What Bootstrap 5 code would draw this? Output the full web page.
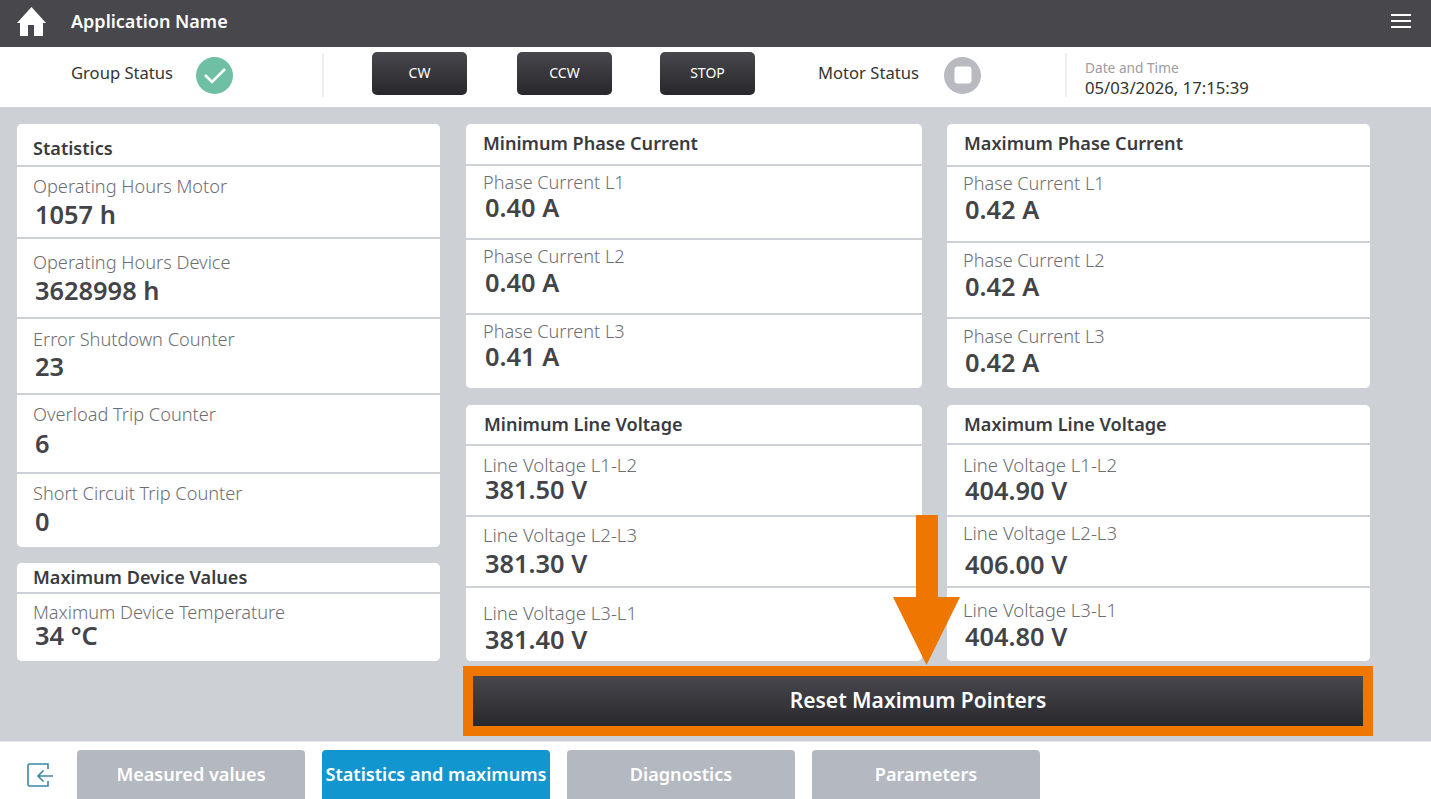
<!DOCTYPE html>
<html lang="en">
<head>
<meta charset="utf-8">
<title>Application Name</title>
<link href="https://cdn.jsdelivr.net/npm/bootstrap@5.3.2/dist/css/bootstrap.min.css" rel="stylesheet">
<style>
html, body { height: 799px; overflow: hidden; }
body { font-family: "Noto Sans", "Open Sans", sans-serif; background: #cdd1d6; color: #3f4045; }

/* top bars */
.app-bar { height: 47px; background: #47474c; padding: 0 20px 5px 17px; }
.app-bar .navbar-brand { font-size: 18px; font-weight: 600; color: #fff; margin: 0 0 0 25px; padding: 0; }
.menu-btn { background: none; border: 0; padding: 0; line-height: 0; }
.status-bar { height: 60px; background: #fff; padding-bottom: 4px; }
.status-label { font-size: 16.6px; color: #333; width: 125px; margin-left: 71px; margin-top: -3px; }
.status-label.motor { margin-left: 63px; width: 126px; }
.status-dot { width: 37px; height: 37px; border-radius: 50%; flex: none; }
.dot-ok { background: #6fbfa5; }
.dot-off { background: #b8bac0; }
.v-sep { width: 2px; height: 44px; background: #eceef0; flex: none; }
.sep-one { margin-left: 89px; margin-right: 48px; }
.sep-two { margin-left: 84px; margin-right: 18px; }
.cmd-btn { width: 95px; height: 43px; margin-top: -3px; padding: 0 0 3px; font-size: 14px; color: #fff; border: 0; border-radius: 5px; background: linear-gradient(#47474d, #27272c); }
.cmd-btn:hover { color: #fff; background: linear-gradient(#47474d, #27272c); }
.cmd-btn + .cmd-btn { margin-left: 50px; }
.cmd-btn.stop { margin-left: 48px; }
.dt-block { padding-top: 8px; }
.dt-label { font-size: 13.7px; line-height: 18px; color: #9a9ca0; }
.dt-value { font-size: 16.7px; line-height: 22px; color: #333; }

/* content */
.content { height: 634px; position: relative; padding: 17px 0 0 17px; gap: 26px; }
.col-left { width: 423px; gap: 16px; }
.col-right { width: 904px; }
.col-mid { width: 456px; gap: 17px; }
.col-end { width: 423px; gap: 17px; }
.cols { gap: 25px; }
.card { border: 0; border-radius: 5px; }
.card-header { background: #fff; border: 0; padding: 0 0 0 16px; font-size: 18.1px; font-weight: 600; color: #3a3b40; display: flex; align-items: center; }
.list-group-item { border: 0; border-top: 2px solid #cdd1d6; padding: 0 0 0 16px; }
.list-group-flush > .list-group-item { border-width: 2px 0 0; }
.metric-label { font-size: 18.2px; font-weight: 300; line-height: 20px; color: #6b6e73; }
.metric-value { font-size: 25.4px; font-weight: 600; line-height: 24px; color: #434448; margin-left: 2px; margin-top: var(--gap, 0); }

#stats .card-header { height: 41px; padding-top: 9px; }
#stats .list-group-item:nth-child(1) { height: 72px; padding-top: 9px; --gap: 6px; }
#stats .list-group-item:nth-child(2) { height: 80px; padding-top: 13px; --gap: 6px; }
#stats .list-group-item:nth-child(3) { height: 76px; padding-top: 10px; --gap: 5px; }
#stats .list-group-item:nth-child(4) { height: 79px; padding-top: 9px; --gap: 7px; }
#stats .list-group-item:nth-child(5) { height: 75px; padding-top: 9px; --gap: 6px; }
#device .card-header { height: 29px; }
#device .list-group-item { height: 69px; padding-top: 8px; --gap: 1px; }
#min-cur .card-header { height: 40px; padding: 0 0 1px 17px; }
#min-cur .list-group-item { padding-top: 6px; --gap: 3px; height: 75px; }
#min-cur .list-group-item:nth-child(1) { height: 74px; }
#min-cur .list-group-item:nth-child(2) { --gap: 4px; }
#max-cur .card-header { height: 41px; padding: 0 0 1px 17px; }
#max-cur .list-group-item { padding-top: 7px; height: 76px; --gap: 4px; }
#max-cur .list-group-item:nth-child(1) { padding-top: 6px; }
#max-cur .list-group-item:nth-child(3) { height: 71px; }
#min-volt .card-header { height: 39px; padding: 1px 0 0 18px; }
#min-volt .list-group-item:nth-child(1) { height: 71px; padding-top: 9px; --gap: 2px; }
#min-volt .list-group-item:nth-child(2) { height: 71px; padding-top: 8px; --gap: 6px; }
#min-volt .list-group-item:nth-child(3) { height: 75px; padding-top: 15px; --gap: 4px; }
#max-volt .card-header { height: 38px; padding: 2px 0 0 17px; }
#max-volt .list-group-item:nth-child(1) { height: 72px; padding-top: 10px; --gap: 3px; }
#max-volt .list-group-item:nth-child(2) { height: 71px; padding-top: 6px; --gap: 9px; }
#max-volt .list-group-item:nth-child(3) { height: 75px; padding-top: 12px; --gap: 4px; }
#min-cur .list-group-item, #min-volt .list-group-item { padding-left: 17px; }
#min-cur .metric-label, #max-cur .metric-label { font-size: 18.1px; }
#min-volt .metric-label, #max-volt .metric-label { font-size: 18.5px; }

.reset-btn { width: 910px; height: 70px; margin: 5px 0 0 -3px; padding: 0; border: 10px solid #ef7600; border-radius: 0; font-size: 21px; font-weight: 600; color: #fff; background: linear-gradient(#47474d, #28282d) padding-box; }
.reset-btn:hover { color: #fff; border-color: #ef7600; background: linear-gradient(#47474d, #28282d) padding-box; }
.callout-arrow { position: absolute; left: 893px; top: 408px; }

/* bottom tabs */
.tab-bar { height: 58px; background: #fff; padding: 8px 0 0 27px; border-top: 1px solid #e4e6e8; }
.exit-btn { background: none; border: 0; padding: 0; line-height: 0; margin: 13px 24px 0 0; align-self: flex-start; }
.tab-btn { width: 228px; height: 49px; padding: 0; margin-right: 17px; border: 0; border-radius: 4px 4px 0 0; font-size: 18.1px; font-weight: 600; color: #fff; background: #b4b8c0; white-space: nowrap; }
.tab-btn:hover { color: #fff; background: #b4b8c0; }
.tab-btn.active, .tab-btn.active:hover { color: #fff; background: #1296d0; }
</style>
</head>
<body>
<nav class="navbar app-bar flex-nowrap justify-content-between">
  <div class="d-flex align-items-center">
    <svg width="29" height="29" viewBox="0 0 29 29" aria-hidden="true"><path fill="#fff" d="M14.500 0 0 16h3v13h8V18h6v11h9V16h3z"/></svg>
    <span class="navbar-brand">Application Name</span>
  </div>
  <button class="menu-btn" type="button" aria-label="Menu">
    <svg width="20" height="14" viewBox="0 0 20 14" aria-hidden="true"><path stroke="#fff" stroke-width="2" d="M0 1h20M0 7h20M0 13h20"/></svg>
  </button>
</nav>

<div class="status-bar d-flex align-items-center">
  <span class="status-label">Group Status</span>
  <span class="status-dot dot-ok d-flex align-items-center justify-content-center">
    <svg width="22" height="17" viewBox="0 0 22 17" aria-hidden="true"><path fill="none" stroke="#fff" stroke-width="2.600" d="M1 8l7 7L21 2"/></svg>
  </span>
  <span class="v-sep sep-one"></span>
  <button class="btn cmd-btn" type="button">CW</button>
  <button class="btn cmd-btn" type="button">CCW</button>
  <button class="btn cmd-btn stop" type="button">STOP</button>
  <span class="status-label motor">Motor Status</span>
  <span class="status-dot dot-off d-flex align-items-center justify-content-center">
    <svg width="18" height="18" viewBox="0 0 18 18" aria-hidden="true"><rect x="0.500" y="0.500" width="17" height="17" rx="3" fill="#fff"/></svg>
  </span>
  <span class="v-sep sep-two"></span>
  <div class="dt-block">
    <div class="dt-label">Date and Time</div>
    <div class="dt-value">05/03/2026, 17:15:39</div>
  </div>
</div>

<main class="content d-flex">
  <div class="col-left d-flex flex-column">
    <div class="card" id="stats">
      <div class="card-header">Statistics</div>
      <div class="list-group list-group-flush">
        <div class="list-group-item"><div class="metric-label">Operating Hours Motor</div><div class="metric-value">1057 h</div></div>
        <div class="list-group-item"><div class="metric-label">Operating Hours Device</div><div class="metric-value">3628998 h</div></div>
        <div class="list-group-item"><div class="metric-label">Error Shutdown Counter</div><div class="metric-value">23</div></div>
        <div class="list-group-item"><div class="metric-label">Overload Trip Counter</div><div class="metric-value">6</div></div>
        <div class="list-group-item"><div class="metric-label">Short Circuit Trip Counter</div><div class="metric-value">0</div></div>
      </div>
    </div>
    <div class="card" id="device">
      <div class="card-header">Maximum Device Values</div>
      <div class="list-group list-group-flush">
        <div class="list-group-item"><div class="metric-label">Maximum Device Temperature</div><div class="metric-value">34 °C</div></div>
      </div>
    </div>
  </div>

  <div class="col-right d-flex flex-column">
    <div class="cols d-flex">
      <div class="col-mid d-flex flex-column">
        <div class="card" id="min-cur">
          <div class="card-header">Minimum Phase Current</div>
          <div class="list-group list-group-flush">
            <div class="list-group-item"><div class="metric-label">Phase Current L1</div><div class="metric-value">0.40 A</div></div>
            <div class="list-group-item"><div class="metric-label">Phase Current L2</div><div class="metric-value">0.40 A</div></div>
            <div class="list-group-item"><div class="metric-label">Phase Current L3</div><div class="metric-value">0.41 A</div></div>
          </div>
        </div>
        <div class="card" id="min-volt">
          <div class="card-header">Minimum Line Voltage</div>
          <div class="list-group list-group-flush">
            <div class="list-group-item"><div class="metric-label">Line Voltage L1-L2</div><div class="metric-value">381.50 V</div></div>
            <div class="list-group-item"><div class="metric-label">Line Voltage L2-L3</div><div class="metric-value">381.30 V</div></div>
            <div class="list-group-item"><div class="metric-label">Line Voltage L3-L1</div><div class="metric-value">381.40 V</div></div>
          </div>
        </div>
      </div>
      <div class="col-end d-flex flex-column">
        <div class="card" id="max-cur">
          <div class="card-header">Maximum Phase Current</div>
          <div class="list-group list-group-flush">
            <div class="list-group-item"><div class="metric-label">Phase Current L1</div><div class="metric-value">0.42 A</div></div>
            <div class="list-group-item"><div class="metric-label">Phase Current L2</div><div class="metric-value">0.42 A</div></div>
            <div class="list-group-item"><div class="metric-label">Phase Current L3</div><div class="metric-value">0.42 A</div></div>
          </div>
        </div>
        <div class="card" id="max-volt">
          <div class="card-header">Maximum Line Voltage</div>
          <div class="list-group list-group-flush">
            <div class="list-group-item"><div class="metric-label">Line Voltage L1-L2</div><div class="metric-value">404.90 V</div></div>
            <div class="list-group-item"><div class="metric-label">Line Voltage L2-L3</div><div class="metric-value">406.00 V</div></div>
            <div class="list-group-item"><div class="metric-label">Line Voltage L3-L1</div><div class="metric-value">404.80 V</div></div>
          </div>
        </div>
      </div>
    </div>
    <button class="btn reset-btn" type="button">Reset Maximum Pointers</button>
  </div>

  <svg class="callout-arrow" width="67" height="150" viewBox="0 0 67 150" aria-hidden="true"><path fill="#ef7600" d="M23 0h22v82h22l-33.500 68L0 82h23z"/></svg>
</main>

<footer class="tab-bar d-flex">
  <button class="exit-btn" type="button" aria-label="Exit">
    <svg width="26" height="24" viewBox="0 0 26 24" aria-hidden="true"><path fill="none" stroke="#3a86a8" stroke-width="1.600" d="M21 6V1H2.500A1.500 1.500 0 0 0 1 2.500v19A1.500 1.500 0 0 0 2.500 23H21v-5M26 13H11M16.500 7.500 11 13l5.500 5.500"/></svg>
  </button>
  <button class="btn tab-btn" type="button">Measured values</button>
  <button class="btn tab-btn active" type="button">Statistics and maximums</button>
  <button class="btn tab-btn" type="button">Diagnostics</button>
  <button class="btn tab-btn" type="button">Parameters</button>
</footer>
<script src="https://cdn.jsdelivr.net/npm/bootstrap@5.3.2/dist/js/bootstrap.bundle.min.js"></script>
</body>
</html>
